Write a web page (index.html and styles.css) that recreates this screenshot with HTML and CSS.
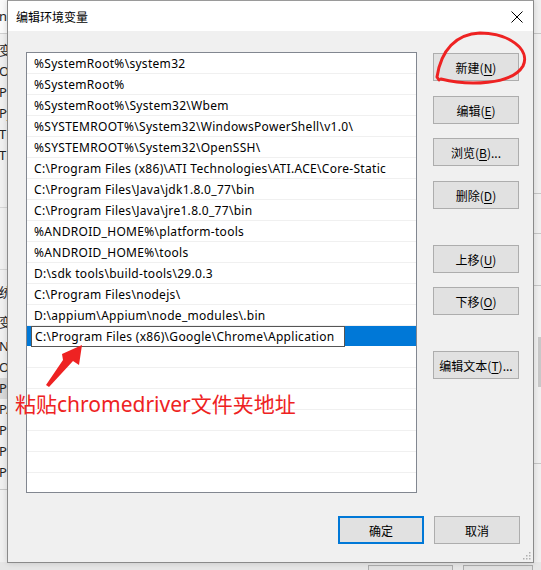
FILE: index.html
```html
<!DOCTYPE html>
<html lang="zh">
<head>
<meta charset="utf-8">
<link rel="stylesheet" href="styles.css">
</head>
<body>
<div class="desktop">
  <div class="bg-left">
    <div class="bg-left-top"><span class="frag">n</span></div>
    <div class="bg-left-list">
      <span class="frag">变</span><span class="frag">O</span><span class="frag">Pa</span><span class="frag">Py</span><span class="frag">TE</span><span class="frag">TM</span>
    </div>
    <div class="bg-left-gap"></div>
    <div class="bg-left-list2">
      <span class="frag head">统</span><span class="frag head2">变</span><span class="frag">N</span><span class="frag">O</span><span class="frag sel">Pa</span><span class="frag">PA</span><span class="frag">PR</span><span class="frag">PR</span><span class="frag">PR</span>
    </div>
  </div>
  <div class="bg-right">
    <div class="bg-right-line l1"></div>
    <div class="bg-right-line l2"></div>
    <div class="bg-right-line l3"></div>
    <div class="bg-right-line l4"></div>
    <div class="bg-right-bar"></div>
    <div class="bg-right-line l5"></div>
  </div>
  <div class="bg-bottom">
    <span class="bg-btn b1"></span><span class="bg-btn b2"></span>
  </div>

  <div class="dialog">
    <div class="titlebar">
      <span class="title">编辑环境变量</span>
      <svg class="close" width="12" height="12" viewBox="0 0 12 12"><path d="M0.5 0.5 L11.5 11.5 M11.5 0.5 L0.5 11.5" stroke="#000" stroke-width="1" fill="none"/></svg>
    </div>
    <div class="body">
      <div class="main">
        <div class="listbox">
          <div class="row">%SystemRoot%\system32</div>
          <div class="row">%SystemRoot%</div>
          <div class="row">%SystemRoot%\System32\Wbem</div>
          <div class="row">%SYSTEMROOT%\System32\WindowsPowerShell\v1.0\</div>
          <div class="row">%SYSTEMROOT%\System32\OpenSSH\</div>
          <div class="row">C:\Program Files (x86)\ATI Technologies\ATI.ACE\Core-Static</div>
          <div class="row">C:\Program Files\Java\jdk1.8.0_77\bin</div>
          <div class="row">C:\Program Files\Java\jre1.8.0_77\bin</div>
          <div class="row">%ANDROID_HOME%\platform-tools</div>
          <div class="row">%ANDROID_HOME%\tools</div>
          <div class="row">D:\sdk tools\build-tools\29.0.3</div>
          <div class="row">C:\Program Files\nodejs\</div>
          <div class="row">D:\appium\Appium\node_modules\.bin</div>
          <div class="row selected"><span class="editbox">C:\Program Files (x86)\Google\Chrome\Application</span></div>
          <div class="row"></div>
          <div class="row"></div>
          <div class="row"></div>
          <div class="row"></div>
          <div class="row"></div>
          <div class="row"></div>
          <div class="row last"></div>
        </div>
        <div class="buttons">
          <button class="btn b-new">新建(<u>N</u>)</button>
          <button class="btn b-edit">编辑(<u>E</u>)</button>
          <button class="btn b-browse">浏览(<u>B</u>)...</button>
          <button class="btn b-del">删除(<u>D</u>)</button>
          <button class="btn b-up">上移(<u>U</u>)</button>
          <button class="btn b-down">下移(<u>O</u>)</button>
          <button class="btn b-text">编辑文本(<u>T</u>)...</button>
        </div>
      </div>
      <div class="footer">
        <button class="btn default">确定</button>
        <button class="btn">取消</button>
      </div>
    </div>
    <svg class="grip" width="8" height="8" viewBox="0 0 8 8"><g fill="#b0b0b0"><rect x="6" y="0" width="1.5" height="1.5"/><rect x="3" y="3" width="1.5" height="1.5"/><rect x="6" y="3" width="1.5" height="1.5"/><rect x="0" y="6" width="1.5" height="1.5"/><rect x="3" y="6" width="1.5" height="1.5"/><rect x="6" y="6" width="1.5" height="1.5"/></g></svg>
  </div>

  <svg class="annot" width="541" height="570" viewBox="0 0 541 570">
    <path d="M441 79 C 468 86, 512 85, 523 66 C 531 49, 508 33, 480 33 C 456 34, 441 50, 437 77 L 439 80" stroke="#ee2222" stroke-width="3" fill="none" stroke-linecap="round" stroke-linejoin="round"/>
    <polygon points="46,385 63,360 62,354 82,345 79,365 73,361 49,387" fill="#ee2222"/>
  </svg>
  <div class="note">粘贴chromedriver文件夹地址</div>
</div>
</body>
</html>
```
FILE: styles.css
```css
* { box-sizing: border-box; }
html, body { margin: 0; padding: 0; }
body {
  width: 541px; height: 570px; overflow: hidden;
  background: #f0f0f0;
  font-family: "Noto Sans", "Noto Sans CJK SC", sans-serif;
  font-size: 12px; color: #000;
}
.desktop { position: relative; width: 541px; height: 570px; background: #e8e8e8; }

.bg-left { position: absolute; left: 0; top: 0; width: 8px; height: 570px; display: flex; flex-direction: column; background: #f0f0f0; overflow: hidden; }
.bg-left-top { height: 34px; flex: none; background: #fafafa; border-bottom: 1px solid #d0d0d0; display: flex; align-items: center; }
.bg-left-list { height: 173px; flex: none; display: flex; flex-direction: column; padding-top: 6px; }
.bg-left-gap { height: 63px; flex: none; border-top: 1px solid #d6d6d6; border-bottom: 1px solid #d6d6d6; }
.bg-left-list2 { flex: none; display: flex; flex-direction: column; padding-top: 12px; padding-bottom: 6px; border-bottom: 1px solid #c8c8c8; }
.frag { display: block; height: 21px; line-height: 21px; font-size: 13px; color: #222; white-space: nowrap; margin-left: -1px; flex: none; }
.frag.head { margin-bottom: 9px; }
.frag.head2 { margin-bottom: 3px; }
.frag.sel { background: #d8d8d8; }

.bg-right { position: absolute; left: 533px; top: 0; width: 8px; height: 570px; background: #f0f0f0; }
.bg-right-line { position: absolute; left: 0; width: 8px; height: 1px; background: #c6c6c6; }
.l1 { top: 33px; } .l2 { top: 193px; } .l3 { top: 233px; } .l4 { top: 285px; } .l5 { top: 463px; }
.bg-right-bar { position: absolute; left: 5px; top: 337px; width: 3px; height: 50px; background: #c8c8c8; }

.bg-bottom { position: absolute; left: 0; top: 562px; width: 541px; height: 8px; background: #e6e6e6; }
.bg-btn { position: absolute; top: 3px; height: 10px; border: 1px solid #adadad; background: #e1e1e1; }
.bg-btn.b1 { left: 368px; width: 85px; }
.bg-btn.b2 { left: 463px; width: 70px; }

.dialog {
  position: absolute; left: 7px; top: 0; width: 527px; height: 563px;
  border: 1px solid #8a8a8a; border-top-color: #9a9a9a;
  background: #f0f0f0; display: flex; flex-direction: column;
  box-shadow: 0 0 6px rgba(0,0,0,0.15);
}
.titlebar { height: 30px; background: #fff; display: flex; align-items: center; justify-content: space-between; padding: 0 10px 0 8px; flex: none; }
.title { font-family: "Noto Sans CJK SC", sans-serif; font-size: 12px; color: #000; }
.close { display: block; margin-top: 1px; }

.body { flex: 1; display: flex; flex-direction: column; padding: 21px 13px 0 18px; }
.main { display: flex; gap: 16px; }
.listbox {
  width: 391px; height: 441px; background: #fff; border: 1px solid #828790;
  display: flex; flex-direction: column; overflow: hidden;
}
.row {
  height: 21px; flex: none; line-height: 18px; padding: 2px 0 0 7px;
  border-bottom: 1px solid #f0f0f0; white-space: nowrap; color: #000;
  letter-spacing: 0.3px;
}
.row.last { border-bottom: none; }
.row.selected { background: #0078d7; padding: 0 0 0 4px; display: flex; align-items: flex-start; border-bottom-color: #fff; }
.editbox {
  display: block; width: 314px; height: 21px; background: #fff;
  border: 1px solid #555; padding: 1px 0 0 3px; line-height: 18px; color: #000;
  letter-spacing: 0.3px;
}

.buttons { display: flex; flex-direction: column; width: 86px; padding-top: 1px; }
.btn {
  width: 86px; height: 28px; border: 1px solid #adadad; background: #e1e1e1;
  font-family: "Noto Sans CJK SC", sans-serif; font-size: 12px; color: #000;
  padding: 0; margin: 0; display: flex; align-items: center; justify-content: center;
}
.btn u { text-decoration: underline; text-underline-offset: 2px; }
.b-edit { margin-top: 15px; }
.b-browse { margin-top: 14px; }
.b-del { margin-top: 15px; }
.b-up { margin-top: 36px; }
.b-down { margin-top: 14px; }
.b-text { margin-top: 36px; }

.footer { display: flex; justify-content: flex-end; gap: 10px; margin-top: 23px; }
.btn.default { border: 2px solid #0078d7; }

.grip { position: absolute; right: 2px; bottom: 2px; }

.annot { position: absolute; left: 0; top: 0; pointer-events: none; }
.note {
  position: absolute; left: 15px; top: 389px;
  font-family: "Noto Sans", "Noto Sans CJK SC", sans-serif;
  font-size: 21px; line-height: 30px; color: #ee2222; white-space: nowrap;
}
```
